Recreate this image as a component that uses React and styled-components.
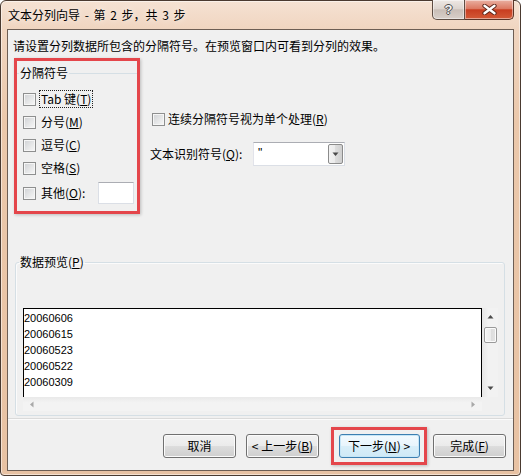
import React from "react";
import styled, { createGlobalStyle } from "styled-components";

const UI_FONT = `"Noto Sans CJK SC", "Liberation Sans", sans-serif`;

const GlobalStyle = createGlobalStyle`
  html, body { margin: 0; padding: 0; background: #ffffff; }
  body { font-family: ${UI_FONT}; font-size: 12px; color: #000; }
  #root { width: 521px; height: 476px; }
`;

/* ---------- window frame ---------- */

const Window = styled.div`
  box-sizing: border-box;
  width: 521px;
  height: 476px;
  display: flex;
  flex-direction: column;
  padding: 0 6px 4px 6px;
  border: 1px solid #4a3a30;
  border-radius: 6px 6px 4px 4px;
  background: linear-gradient(180deg, #f5e2d3 0px, #f0d5c0 28px, #ebc8ab 120px, #e8c2a3 100%);
  box-shadow: inset 0 0 0 1px rgba(255, 255, 255, 0.5);
  font-family: ${UI_FONT};
  font-size: 12px;
`;

const TitleBar = styled.div`
  height: 28px;
  flex: none;
  display: flex;
  align-items: center;
  padding-left: 1px;
`;

const TitleText = styled.div`
  line-height: 16px;
  color: #000;
  word-spacing: 2px;
  text-shadow: 0 0 6px rgba(255, 255, 255, 0.9);
  white-space: pre;
`;

const CaptionGroup = styled.div`
  margin-left: auto;
  align-self: flex-start;
  margin-top: -1px;
  display: flex;
  height: 20px;
`;

const CaptionButton = styled.div`
  box-sizing: border-box;
  width: ${(p) => p.$w}px;
  height: 20px;
  display: flex;
  align-items: center;
  justify-content: center;
  border: 1px solid ${(p) => (p.$close ? "#5a3528" : "#5e4d43")};
  border-top: none;
  border-left-width: ${(p) => (p.$close ? 0 : 1)}px;
  border-radius: ${(p) => (p.$close ? "0 0 5px 0" : "0 0 0 5px")};
  background: ${(p) =>
    p.$close
      ? "linear-gradient(180deg, #eab0a2 0%, #dc7a63 45%, #c83d20 52%, #d35a37 100%)"
      : "linear-gradient(180deg, #eee8e4 0%, #ddd5cf 45%, #c9beb7 52%, #d8cfc9 100%)"};
  box-shadow: inset 0 0 0 1px rgba(255, 255, 255, 0.45);
`;

const HelpGlyph = styled.span`
  font-family: "Liberation Sans", sans-serif;
  font-weight: bold;
  font-size: 13px;
  line-height: 13px;
  color: #f4f4f4;
  text-shadow: 1px 0 #4d4d4d, -1px 0 #4d4d4d, 0 1px #4d4d4d, 0 -1px #4d4d4d;
`;

/* ---------- client area ---------- */

const Client = styled.div`
  flex: 1;
  min-height: 0;
  display: flex;
  flex-direction: column;
  border: 1px solid #6d5e54;
  background: #f0f0f0;
`;

const Instruction = styled.div`
  margin: 8px 0 0 5px;
  height: 16px;
  line-height: 16px;
  white-space: nowrap;
`;

const TopRow = styled.div`
  display: flex;
  align-items: flex-start;
  margin: 4px 0 0 6px;
`;

const Highlight = styled.div`
  box-sizing: border-box;
  flex: none;
  width: ${(p) => p.$w}px;
  height: ${(p) => p.$h}px;
  margin-left: ${(p) => p.$lead || 0}px;
  border: 3px solid #e4464b;
  box-shadow: 1px 1px 3px rgba(0, 0, 0, 0.22);
  display: flex;
  flex-direction: column;
  align-items: ${(p) => (p.$center ? "center" : "stretch")};
  justify-content: ${(p) => (p.$center ? "center" : "flex-start")};
`;

const TopGroup = styled.fieldset`
  margin: 4px 0 0 0;
  padding: 0;
  min-width: 0;
  border: none;
  border-top: 1px solid #d5dfe5;
`;

const Legend = styled.legend`
  margin-left: ${(p) => p.$indent}px;
  padding: 0 1px;
  line-height: 16px;
  color: #000;
`;

const OptionList = styled.div`
  display: flex;
  flex-direction: column;
  gap: 5px;
  padding: 9px 0 0 6px;
`;

const CheckRow = styled.div`
  display: flex;
  align-items: center;
  height: ${(p) => p.$h || 18}px;
  gap: ${(p) => (p.$gap == null ? 3 : p.$gap)}px;
  margin-top: ${(p) => p.$top || 0}px;
  padding-left: ${(p) => p.$indent || 0}px;
`;

const Check = styled.span`
  box-sizing: border-box;
  flex: none;
  width: 13px;
  height: 13px;
  border: 1px solid #8e8f8f;
  background: linear-gradient(135deg, #cfd1d4 0%, #e6e7e8 55%, #f8f8f8 100%);
  box-shadow: inset 0 0 0 1px #f6f6f6;
`;

const CheckLabel = styled.span`
  box-sizing: border-box;
  display: inline-flex;
  align-items: center;
  height: 18px;
  padding: 0 1px;
  border: 1px ${(p) => (p.$focus ? "dotted #222" : "solid transparent")};
  line-height: 16px;
  white-space: nowrap;
`;

const SmallInput = styled.div`
  box-sizing: border-box;
  width: 36px;
  height: 22px;
  margin-left: 8px;
  background: #fff;
  border: 1px solid #dbdfe6;
  border-top-color: #abadb3;
`;

const OptionsColumn = styled.div`
  display: flex;
  flex-direction: column;
  margin-left: 10px;
`;

const FieldRow = styled.div`
  display: flex;
  align-items: center;
  height: 24px;
  margin-top: 14px;
`;

const FieldLabel = styled.span`
  width: 103px;
  line-height: 16px;
  white-space: nowrap;
`;

const Combo = styled.div`
  box-sizing: border-box;
  width: 92px;
  height: 24px;
  display: flex;
  align-items: stretch;
  background: #fff;
  border: 1px solid #dbdfe6;
  border-top-color: #abadb3;
  border-left-color: #e2e3ea;
`;

const ComboValue = styled.span`
  flex: 1;
  padding-left: 4px;
  font-family: "Liberation Sans", sans-serif;
  font-size: 12px;
  line-height: 20px;
`;

const ComboButton = styled.span`
  box-sizing: border-box;
  width: 15px;
  margin: 1px;
  display: flex;
  align-items: center;
  justify-content: center;
  border: 1px solid #8b8b8b;
  border-radius: 2px;
  background: linear-gradient(90deg, #f2f2f2 0%, #ebebeb 49%, #dddddd 50%, #cfcfcf 100%);
`;

/* ---------- data preview ---------- */

const PreviewGroup = styled.fieldset`
  box-sizing: border-box;
  width: 490px;
  margin: 40px 0 0 7px;
  padding: 0;
  min-width: 0;
  border: 1px solid #d5dfe5;
  border-radius: 3px;
  box-shadow: inset 1px 1px 0 #fbfbfb;
`;

const PreviewBody = styled.div`
  padding: 38px 0 4px 7px;
`;

const PreviewPane = styled.div`
  display: grid;
  grid-template-columns: 459px 16px;
  grid-template-rows: 89px 14px;
`;

const DataList = styled.div`
  box-sizing: border-box;
  border: 1px solid #000;
  border-bottom: none;
  background: #fff;
  padding-top: 1px;
  font-family: "Liberation Sans", Arial, sans-serif;
  font-size: 11px;
  line-height: 16px;
  color: #000;
  overflow: hidden;
`;

const VScroll = styled.div`
  display: flex;
  flex-direction: column;
  align-items: center;
  background: linear-gradient(90deg, #e6e6e6 0%, #f2f2f2 40%, #f2f2f2 100%);
`;

const HScroll = styled.div`
  display: flex;
  align-items: center;
  justify-content: space-between;
  background: linear-gradient(180deg, #e9e9e9 0%, #f3f3f3 40%, #f3f3f3 100%);
`;

const Corner = styled.div`
  background: #f0f0f0;
`;

const ArrowCell = styled.div`
  flex: none;
  width: ${(p) => p.$w || 16}px;
  height: ${(p) => p.$h || 16}px;
  display: flex;
  align-items: center;
  justify-content: center;
`;

const Thumb = styled.div`
  box-sizing: border-box;
  width: 13px;
  height: 16px;
  margin-top: 2px;
  border: 1px solid #9a9a9a;
  border-radius: 2px;
  background: linear-gradient(90deg, #f6f6f6 0%, #ececec 50%, #dcdcdc 51%, #e4e4e4 100%);
  box-shadow: inset 0 0 0 1px #fbfbfb;
`;

const Spacer = styled.div`
  flex: 1;
`;

const Separator = styled.div`
  height: 1px;
  margin-top: 2px;
  border-bottom: 1px solid #fbfbfb;
  background: #dadada;
`;

/* ---------- buttons ---------- */

const ButtonRow = styled.div`
  display: flex;
  align-items: center;
  justify-content: flex-end;
  margin-top: 7px;
  padding-right: 7px;
`;

const Button = styled.div`
  box-sizing: border-box;
  width: ${(p) => p.$w || 73}px;
  height: 24px;
  margin-left: ${(p) => p.$lead || 0}px;
  display: flex;
  align-items: center;
  justify-content: center;
  border: 1px solid ${(p) => (p.$default ? "#3c7fb1" : "#707070")};
  border-radius: 3px;
  background: ${(p) =>
    p.$default
      ? "linear-gradient(180deg, #f3fafe 0%, #e8f5fc 49%, #d9eff9 50%, #cfe9f6 100%)"
      : "linear-gradient(180deg, #f2f2f2 0%, #ebebeb 49%, #dddddd 50%, #cfcfcf 100%)"};
  box-shadow: inset 0 0 0 1px ${(p) => (p.$default ? "#c6e6f7" : "#fbfbfb")};
  line-height: 16px;
  white-space: pre;
`;

const Arrow = ({ dir }) => {
  const paths = {
    up: "M0.5 4.5 L3.5 1 L6.5 4.5 Z",
    down: "M0.5 0.5 L3.5 4 L6.5 0.5 Z",
    left: "M4.5 0.5 L1 3.5 L4.5 6.5 Z",
    right: "M0.5 0.5 L4 3.5 L0.5 6.5 Z",
  };
  const vertical = dir === "up" || dir === "down";
  return (
    <svg width={vertical ? 7 : 5} height={vertical ? 5 : 7} viewBox={vertical ? "0 0 7 5" : "0 0 5 7"}>
      <path d={paths[dir]} fill={vertical ? "#4a4a4a" : "#a8a8a8"} />
    </svg>
  );
};

const rows = ["20060606", "20060615", "20060523", "20060522", "20060309"];

export default function App() {
  return (
    <>
      <GlobalStyle />
      <Window>
        <TitleBar>
          <TitleText>文本分列向导 - 第 2 步，共 3 步</TitleText>
          <CaptionGroup>
            <CaptionButton $w={33}>
              <HelpGlyph>?</HelpGlyph>
            </CaptionButton>
            <CaptionButton $w={49} $close>
              <svg width="15" height="11" viewBox="0 0 15 11">
                <path d="M2.5 1.8 L12.5 9.2 M12.5 1.8 L2.5 9.2" stroke="#5a2418" strokeWidth="4.2" strokeLinecap="round" />
                <path d="M2.5 1.8 L12.5 9.2 M12.5 1.8 L2.5 9.2" stroke="#ffffff" strokeWidth="2.4" strokeLinecap="round" />
              </svg>
            </CaptionButton>
          </CaptionGroup>
        </TitleBar>

        <Client>
          <Instruction>请设置分列数据所包含的分隔符号。在预览窗口内可看到分列的效果。</Instruction>

          <TopRow>
            <Highlight $w={126} $h={156}>
              <TopGroup>
                <Legend $indent={2}>分隔符号</Legend>
                <OptionList>
                  <CheckRow>
                    <Check />
                    <CheckLabel $focus>
                      Tab 键(<u>T</u>)
                    </CheckLabel>
                  </CheckRow>
                  <CheckRow>
                    <Check />
                    <CheckLabel>
                      分号(<u>M</u>)
                    </CheckLabel>
                  </CheckRow>
                  <CheckRow>
                    <Check />
                    <CheckLabel>
                      逗号(<u>C</u>)
                    </CheckLabel>
                  </CheckRow>
                  <CheckRow>
                    <Check />
                    <CheckLabel>
                      空格(<u>S</u>)
                    </CheckLabel>
                  </CheckRow>
                  <CheckRow $h={22}>
                    <Check />
                    <CheckLabel>
                      其他(<u>O</u>):
                    </CheckLabel>
                    <SmallInput />
                  </CheckRow>
                </OptionList>
              </TopGroup>
            </Highlight>

            <OptionsColumn>
              <CheckRow $top={52} $indent={2} $gap={1}>
                <Check />
                <CheckLabel>
                  连续分隔符号视为单个处理(<u>R</u>)
                </CheckLabel>
              </CheckRow>
              <FieldRow>
                <FieldLabel>
                  文本识别符号(<u>Q</u>):
                </FieldLabel>
                <Combo>
                  <ComboValue>"</ComboValue>
                  <ComboButton>
                    <Arrow dir="down" />
                  </ComboButton>
                </Combo>
              </FieldRow>
            </OptionsColumn>
          </TopRow>

          <PreviewGroup>
            <Legend $indent={3}>
              数据预览(<u>P</u>)
            </Legend>
            <PreviewBody>
              <PreviewPane>
                <DataList>
                  {rows.map((r) => (
                    <div key={r}>{r}</div>
                  ))}
                </DataList>
                <VScroll>
                  <ArrowCell $h={17}>
                    <Arrow dir="up" />
                  </ArrowCell>
                  <Thumb />
                  <Spacer />
                  <ArrowCell $h={18}>
                    <Arrow dir="down" />
                  </ArrowCell>
                </VScroll>
                <HScroll>
                  <ArrowCell $w={17} $h={14}>
                    <Arrow dir="left" />
                  </ArrowCell>
                  <ArrowCell $w={17} $h={14}>
                    <Arrow dir="right" />
                  </ArrowCell>
                </HScroll>
                <Corner />
              </PreviewPane>
            </PreviewBody>
          </PreviewGroup>

          <Separator />

          <ButtonRow>
            <Button>取消</Button>
            <Button $lead={10}>
              {"< 上一步("}
              <u>B</u>)
            </Button>
            <Highlight $w={96} $h={38} $center $lead={12}>
              <Button $w={81} $default>
                下一步(<u>N</u>
                {") >"}
              </Button>
            </Highlight>
            <Button $lead={6}>
              完成(<u>F</u>)
            </Button>
          </ButtonRow>
        </Client>
      </Window>
    </>
  );
}
